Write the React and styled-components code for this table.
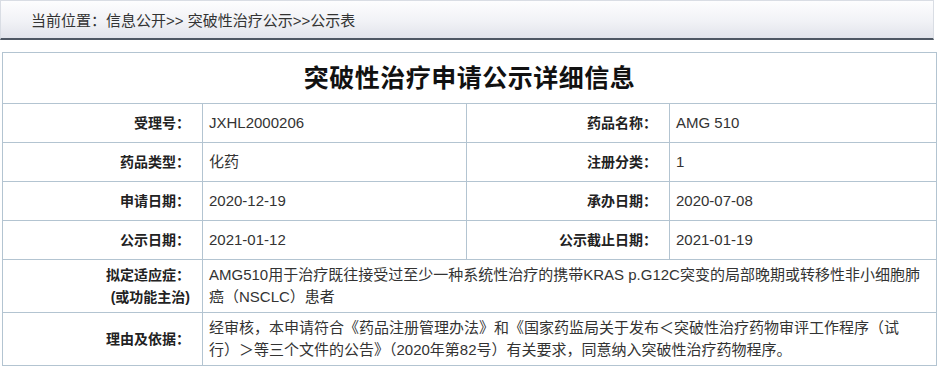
import React from 'react';
import styled, { createGlobalStyle } from 'styled-components';

const GlobalStyle = createGlobalStyle`
  html, body {
    margin: 0;
    padding: 0;
    background: #ffffff;
  }
  body {
    font-family: "Liberation Sans", "Noto Sans CJK SC", sans-serif;
    color: #333333;
  }
`;

const Page = styled.div`
  width: 940px;
  height: 369px;
  overflow: hidden;
  background: #ffffff;
`;

const Crumbs = styled.div`
  box-sizing: border-box;
  width: 934px;
  height: 40px;
  padding-left: 30px;
  display: flex;
  align-items: center;
  font-size: 15px;
  color: #333333;
  background: linear-gradient(to bottom, #fdfdfe 0%, #f1f2f6 55%, #e2e4eb 100%);
  border: 1px solid #d9dde4;
  border-bottom: 2px solid #4f5864;
`;

const Sheet = styled.table`
  margin: 12px 0 0 2px;
  width: 934px;
  border-collapse: collapse;
  table-layout: fixed;
  font-size: 15px;
`;

const Cell = styled.td`
  border: 1px solid #b3c4d1;
  height: 39px;
  padding: 4px 6px;
  line-height: 22px;
  box-sizing: border-box;
  vertical-align: middle;
  color: #333333;
`;

const Title = styled(Cell)`
  height: 51px;
  text-align: center;
  font-size: 25px;
  font-weight: bold;
  color: #111111;
  letter-spacing: 0.5px;
`;

const Label = styled(Cell)`
  text-align: right;
  padding-right: 12px;
  font-size: 14px;
  font-weight: bold;
  color: #222222;
`;

const Value = styled(Cell)`
  padding-left: 6px;
`;

const TallRow = styled.tr`
  td {
    height: ${p => p.$h}px;
  }
`;

const pairs = [
  ['受理号：', 'JXHL2000206', '药品名称：', 'AMG 510'],
  ['药品类型：', '化药', '注册分类：', '1'],
  ['申请日期：', '2020-12-19', '承办日期：', '2020-07-08'],
  ['公示日期：', '2021-01-12', '公示截止日期：', '2021-01-19'],
];

export default function App() {
  return (
    <Page>
      <GlobalStyle />
      <Crumbs>当前位置：信息公开&gt;&gt; 突破性治疗公示&gt;&gt;公示表</Crumbs>
      <Sheet>
        <colgroup>
          <col style={{ width: 200 }} />
          <col style={{ width: 264 }} />
          <col style={{ width: 203 }} />
          <col style={{ width: 267 }} />
        </colgroup>
        <tbody>
          <tr>
            <Title colSpan={4}>突破性治疗申请公示详细信息</Title>
          </tr>
          {pairs.map(r => (
            <tr key={r[0]}>
              <Label>{r[0]}</Label>
              <Value>{r[1]}</Value>
              <Label>{r[2]}</Label>
              <Value>{r[3]}</Value>
            </tr>
          ))}
          <TallRow $h={53}>
            <Label>拟定适应症：<br />(或功能主治)</Label>
            <Value colSpan={3}>
              AMG510用于治疗既往接受过至少一种系统性治疗的携带KRAS p.G12C突变的局部晚期或转移性非小细胞肺癌（NSCLC）患者
            </Value>
          </TallRow>
          <TallRow $h={53}>
            <Label>理由及依据：</Label>
            <Value colSpan={3}>
              经审核，本申请符合《药品注册管理办法》和《国家药监局关于发布＜突破性治疗药物审评工作程序（试<br />
              行）＞等三个文件的公告》（2020年第82号）有关要求，同意纳入突破性治疗药物程序。
            </Value>
          </TallRow>
        </tbody>
      </Sheet>
    </Page>
  );
}
